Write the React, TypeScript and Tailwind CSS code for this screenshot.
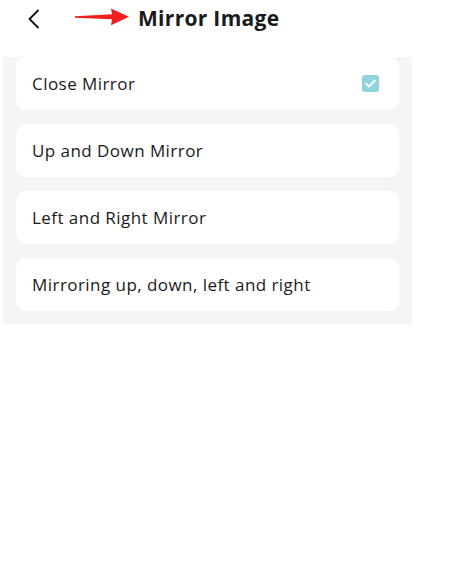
const options = [
  { label: 'Close Mirror', checked: true },
  { label: 'Up and Down Mirror', checked: false },
  { label: 'Left and Right Mirror', checked: false },
  { label: 'Mirroring up, down, left and right', checked: false },
];

export default function App() {
  return (
    <div className="w-[467px] h-[561px] bg-white font-['Open_Sans','Noto_Sans',sans-serif] text-[#1a1a1a]">
      {/* Header */}
      <div className="h-[57px] flex items-start pt-[6px]">
        <button className="ml-[26px] mt-[2px] w-[16px] h-[22px] flex items-center justify-center">
          <svg width="14" height="20" viewBox="0 0 14 20" fill="none">
            <path d="M11 1.5L2.5 10L11 18.5" stroke="#111" strokeWidth="1.8" strokeLinecap="round" strokeLinejoin="round" />
          </svg>
        </button>
        <svg className="ml-[33px] mt-[2px]" width="55" height="18" viewBox="0 0 55 18">
          <path d="M0 8.2 L37 6.2 L36 0.5 L54 8.8 L36 17.2 L37 11.2 L0 9.8 Z" fill="#f21d1d" />
        </svg>
        <h1 className="ml-[8px] text-[21px] leading-[24px] font-bold tracking-[0.3px]">Mirror Image</h1>
      </div>

      {/* Options */}
      <div className="ml-[3px] w-[409px] bg-[#f5f5f5] px-[13px] pb-[13px] flex flex-col gap-[14px]">
        {options.map(o => (
          <div
            key={o.label}
            className="h-[53px] rounded-[10px] bg-white flex items-center justify-between pl-[16px] pr-[20px]"
          >
            <span className="text-[17px] tracking-[0.45px]">{o.label}</span>
            {o.checked && (
              <span className="w-[17px] h-[17px] rounded-[3px] bg-[#8fd3dc] flex items-center justify-center">
                <svg width="11" height="9" viewBox="0 0 11 9" fill="none">
                  <path d="M1 4.5L4 7.5L10 1.5" stroke="white" strokeWidth="1.8" strokeLinecap="round" strokeLinejoin="round" />
                </svg>
              </span>
            )}
          </div>
        ))}
      </div>
    </div>
  );
}
